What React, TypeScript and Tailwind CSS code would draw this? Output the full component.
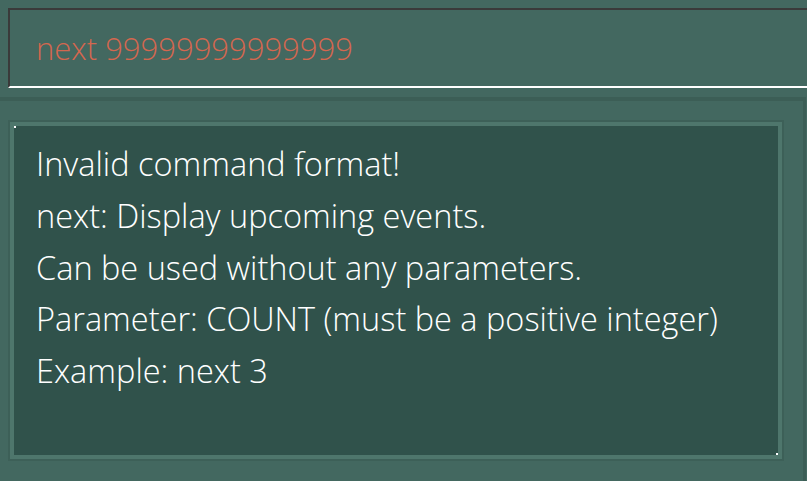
export default function App() {
  const lines = [
    "Invalid command format!",
    "next: Display upcoming events.",
    "Can be used without any parameters.",
    "Parameter: COUNT (must be a positive integer)",
    "Example: next 3",
  ];
  return (
    <div
      className="w-[807px] h-[481px] bg-[#436860] overflow-hidden flex flex-col"
      style={{ fontFamily: '"Open Sans", "Noto Sans", sans-serif' }}
    >
      <div className="h-[97px] pt-[8px] pl-[8px]">
        <div className="h-[80px] border-t-2 border-l-2 border-b-2 border-t-[#3a3a3a] border-l-[#3a3a3a] border-b-white flex items-center pl-[26px]">
          <span className="text-[#d4674f] text-[31px] font-light">next 99999999999999</span>
        </div>
      </div>
      <div className="flex-1 border-t-4 border-r-[3px] border-[#3c5e56] mr-[1px] pt-[19px] pl-[8px] pr-[19px] pb-[20px] flex">
        <div className="flex-1 border-2 border-[#3d6058]">
          <div className="h-full border-4 border-[#4e766c]">
            <div className="relative h-full bg-[#30524b] pl-[22px] pt-[12px]">
              <div className="absolute left-0 top-0 w-[2px] h-[2px] bg-white" />
              <div className="absolute right-0 bottom-0 w-[2px] h-[2px] bg-white" />
              {lines.map((l) => (
                <div key={l} className="text-white text-[32.5px] font-light leading-[51.75px] whitespace-nowrap">
                  {l}
                </div>
              ))}
            </div>
          </div>
        </div>
      </div>
    </div>
  );
}
